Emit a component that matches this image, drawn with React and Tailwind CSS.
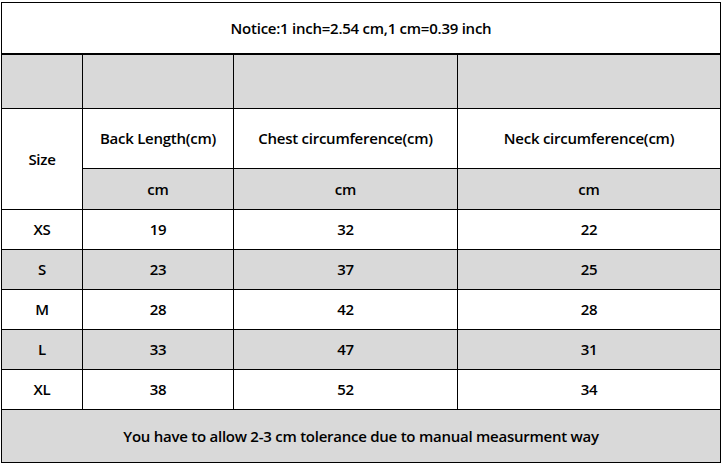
import React from "react";

const rows = [
  ["XS", "19", "32", "22"],
  ["S", "23", "37", "25"],
  ["M", "28", "42", "28"],
  ["L", "33", "47", "31"],
  ["XL", "38", "52", "34"],
];

function Cell({ children, grey, className = "" }) {
  return (
    <div className={`flex items-center justify-center ${grey ? "bg-[#d9d9d9]" : "bg-white"} ${className}`}>
      {children}
    </div>
  );
}

export default function App() {
  return (
    <div className="w-[723px] h-[465px] bg-white pt-[2px] pl-[1px] text-black text-[15px] font-semibold tracking-[-0.25px]" style={{ fontFamily: '"Open Sans", "Noto Sans", sans-serif' }}>
      <div className="w-[720px] border border-black">
        <div className="h-[52px] flex items-center justify-center border-b-2 border-black">
          Notice:1 inch=2.54 cm,1 cm=0.39 inch
        </div>
        <div className="grid grid-cols-[80px_150px_223px_262px] grid-rows-[53px_59px_40px_39px_39px_39px_39px_39px_52px] gap-px bg-black">
          <Cell grey />
          <Cell grey />
          <Cell grey />
          <Cell grey />

          <Cell className="row-span-2">Size</Cell>
          <Cell>Back Length(cm)</Cell>
          <Cell>Chest circumference(cm)</Cell>
          <Cell>Neck circumference(cm)</Cell>

          <Cell grey>cm</Cell>
          <Cell grey>cm</Cell>
          <Cell grey>cm</Cell>

          {rows.map((r, i) => (
            <React.Fragment key={r[0]}>
              {r.map((v, j) => (
                <Cell key={j} grey={i % 2 === 1}>{v}</Cell>
              ))}
            </React.Fragment>
          ))}

          <Cell grey className="col-span-4">
            You have to allow 2-3 cm tolerance due to manual measurment way
          </Cell>
        </div>
      </div>
    </div>
  );
}
